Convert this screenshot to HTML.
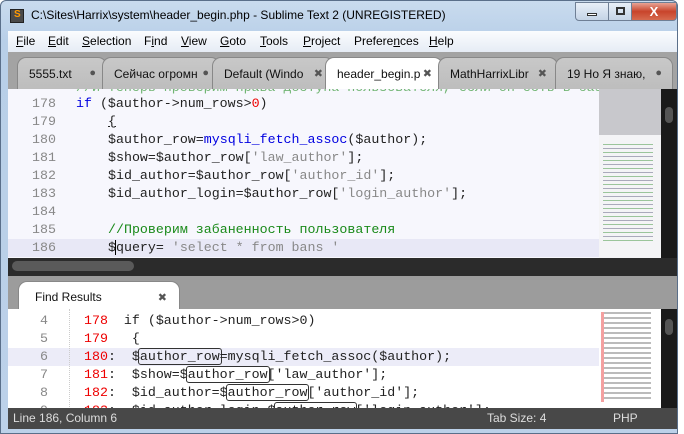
<!DOCTYPE html>
<html><head><meta charset="utf-8"><style>
*{margin:0;padding:0;box-sizing:border-box}
body{width:684px;height:434px;background:#fff;position:relative;overflow:hidden;font-family:"Liberation Sans","Noto Sans CJK SC",sans-serif}
.win{position:absolute;left:0;top:0;width:678px;height:434px;background:linear-gradient(#c9dbee,#b8cfe8 40px,#bcd1e9);border:1px solid #5a6f8a;border-radius:6px 6px 0 0}
.title{position:absolute;left:30px;top:7px;font-size:12px;color:#000}
.ico{position:absolute;left:9px;top:8px;width:14px;height:14px;background:#4a4a4a;border:1px solid #222}
.ico:after{content:"S";position:absolute;left:3px;top:-1px;font-size:10px;color:#f90;font-weight:bold}
.btn{position:absolute;top:1px;height:19px;border:1px solid #6f7f95;background:linear-gradient(#e8eff8,#c5d4e6);}
.menu{position:absolute;left:7px;top:30px;width:669px;height:21px;background:linear-gradient(#fbfcfe,#e6ecf5);font-size:12px}
.menu span{position:absolute;top:3px}
.tabs{position:absolute;left:7px;top:51px;width:669px;height:37px;background:#a3a3a3}
.tab{position:absolute;top:5px;height:32px;background:linear-gradient(#c8c8c8,#bdbdbd);border-radius:9px 9px 0 0;font-size:12px;padding:9px 0 0 11px;color:#111;white-space:nowrap;overflow:hidden;border:1px solid #888;border-bottom:none}
.tab.a{background:#fff;height:33px}
.tab i{position:absolute;right:10px;top:9px;font-style:normal;color:#555;font-size:11px}
.ed{position:absolute;left:7px;top:88px;width:591px;height:169px;background:#f7f7fd;overflow:hidden}
.mono{font-family:"Liberation Mono",monospace;font-size:13.3px}
.ln{position:absolute;left:0;width:48px;text-align:right;color:#888}
.cd{position:absolute;white-space:pre;color:#222}
.mm{position:absolute;left:598px;top:88px;width:62px;height:169px;background:#f4f4f6}
.sb{position:absolute;left:660px;top:88px;width:16px;height:169px;background:#1a1a1a}
.dark{position:absolute;left:7px;top:257px;width:669px;height:18px;background:#2b2b2b}
.ptabs{position:absolute;left:7px;top:275px;width:669px;height:33px;background:#9c9c9c}
.fr{position:absolute;left:7px;top:308px;width:591px;height:100px;background:#fff;overflow:hidden}
.status{position:absolute;left:7px;top:407px;width:669px;height:21px;background:#484848;color:#ddd;font-size:12px}
.k{color:#0000e0}.s{color:#888}.c{color:#1a8a1a}.r{color:#e00}
.box{border:1px solid #333;border-radius:3px;padding:0 1px;margin:0 -2px}
</style></head><body>
<div class="win">
<div class="ico"></div>
<div class="title">C:\Sites\Harrix\system\header_begin.php - Sublime Text 2 (UNREGISTERED)</div>
<div class="btn" style="left:574px;width:34px;border-radius:0 0 0 4px"><div style="position:absolute;left:11px;top:10px;width:10px;height:3px;background:#fff;border:1px solid #333"></div></div>
<div class="btn" style="left:607px;width:24px"><div style="position:absolute;left:7px;top:4px;width:9px;height:8px;border:2px solid #333"></div></div>
<div class="btn" style="left:630px;width:46px;background:linear-gradient(#e8a395,#c8442b 50%,#d66a4f);border-radius:0 0 4px 0;color:#fff;font-weight:bold;text-align:center;font-size:13px;line-height:17px">X</div>
<div class="menu"><span style="left:8px"><u>F</u>ile</span><span style="left:40px"><u>E</u>dit</span><span style="left:74px"><u>S</u>election</span><span style="left:136px">F<u>i</u>nd</span><span style="left:173px"><u>V</u>iew</span><span style="left:212px"><u>G</u>oto</span><span style="left:252px"><u>T</u>ools</span><span style="left:295px"><u>P</u>roject</span><span style="left:346px">Prefere<u>n</u>ces</span><span style="left:421px"><u>H</u>elp</span></div>
<div class="tabs">
<div class="tab" style="left:9px;width:90px">5555.txt<i>●</i></div>
<div class="tab" style="left:94px;width:118px">Сейчас огромн<i>●</i></div>
<div class="tab" style="left:204px;width:122px">Default (Windo<i>✖</i></div>
<div class="tab a" style="left:317px;width:118px">header_begin.p<i>✖</i></div>
<div class="tab" style="left:430px;width:120px">MathHarrixLibr<i>✖</i></div>
<div class="tab" style="left:547px;width:118px">19 Но Я знаю,<i>●</i></div>
</div>
<div class="ed mono">
<div style="position:absolute;left:0;top:150px;width:591px;height:18px;background:#e8e8f6"></div>
<div class="cd c" style="left:68px;top:-9px;opacity:.6">//И теперь проверим права доступа пользователя, если он есть в базе</div>
<div class="ln" style="top:7px">178</div><div class="cd" style="left:68px;top:7px"><span class="k">if</span> ($author->num_rows><span class="r">0</span>)</div>
<div class="ln" style="top:25px">179</div><div class="cd" style="left:100px;top:25px"><u>{</u></div>
<div class="ln" style="top:43px">180</div><div class="cd" style="left:100px;top:43px">$author_row=<span class="k">mysqli_fetch_assoc</span>($author);</div>
<div class="ln" style="top:61px">181</div><div class="cd" style="left:100px;top:61px">$show=$author_row[<span class="s">'law_author'</span>];</div>
<div class="ln" style="top:79px">182</div><div class="cd" style="left:100px;top:79px">$id_author=$author_row[<span class="s">'author_id'</span>];</div>
<div class="ln" style="top:97px">183</div><div class="cd" style="left:100px;top:97px">$id_author_login=$author_row[<span class="s">'login_author'</span>];</div>
<div class="ln" style="top:115px">184</div>
<div class="ln" style="top:133px">185</div><div class="cd c" style="left:100px;top:133px">//Проверим забаненность пользователя</div>
<div class="ln" style="top:151px">186</div><div class="cd" style="left:100px;top:151px">$<span style="border-left:1px solid #000;margin-left:-1px"></span>query= <span class="s">'select * from bans '</span></div>
</div>
<div class="mm"><div style="position:absolute;left:0;top:0;width:62px;height:46px;background:#c8c8cc"></div>
<div style="position:absolute;left:4px;top:55px;width:50px;height:100px;background:repeating-linear-gradient(#9bc59b 0 1px,transparent 1px 4px,#aab 4px 5px,transparent 5px 8px)"></div></div>
<div class="sb"><div style="position:absolute;left:4px;top:18px;width:8px;height:16px;background:#555;border-radius:4px"></div></div>
<div class="dark"><div style="position:absolute;left:4px;top:3px;width:122px;height:10px;background:#5a5a5a;border-radius:5px"></div></div>
<div class="ptabs"><div class="tab a" style="left:10px;top:5px;width:162px;height:29px;padding:8px 0 0 16px">Find Results<i style="right:12px">✖</i></div></div>
<div class="fr mono">
<div style="position:absolute;left:0;top:39px;width:591px;height:18px;background:#ececf8"></div>
<div style="position:absolute;left:61px;top:0;height:100px;border-left:1px dotted #ccc"></div>
<div class="ln" style="top:4px;width:40px">4</div><div class="cd" style="left:76px;top:4px"><span class="r">178</span>  if ($author->num_rows>0)</div>
<div class="ln" style="top:22px;width:40px">5</div><div class="cd" style="left:76px;top:22px"><span class="r">179</span>   {</div>
<div class="ln" style="top:40px;width:40px">6</div><div class="cd" style="left:76px;top:40px"><span class="r">180</span>:  $<span class="box">author_row</span>=mysqli_fetch_assoc($author);</div>
<div class="ln" style="top:58px;width:40px">7</div><div class="cd" style="left:76px;top:58px"><span class="r">181</span>:  $show=$<span class="box">author_row</span>['law_author'];</div>
<div class="ln" style="top:76px;width:40px">8</div><div class="cd" style="left:76px;top:76px"><span class="r">182</span>:  $id_author=$<span class="box">author_row</span>['author_id'];</div>
<div class="ln" style="top:94px;width:40px">9</div><div class="cd" style="left:76px;top:94px"><span class="r">183</span>:  $id_author_login=$<span class="box">author_row</span>['login_author'];</div>
</div>
<div class="mm" style="top:308px;height:100px;background:#fff"><div style="position:absolute;left:2px;top:3px;width:50px;height:90px;background:repeating-linear-gradient(#bbb 0 2px,transparent 2px 5px)"></div><div style="position:absolute;left:2px;top:3px;width:3px;height:90px;background:#f4a0a0"></div></div>
<div class="sb" style="top:308px;height:100px"><div style="position:absolute;left:4px;top:10px;width:8px;height:16px;background:#555;border-radius:4px"></div></div>
<div class="status"><span style="position:absolute;left:5px;top:3px">Line 186, Column 6</span><span style="position:absolute;left:479px;top:3px">Tab Size: 4</span><span style="position:absolute;left:605px;top:3px">PHP</span></div>
</div>
</body></html>
